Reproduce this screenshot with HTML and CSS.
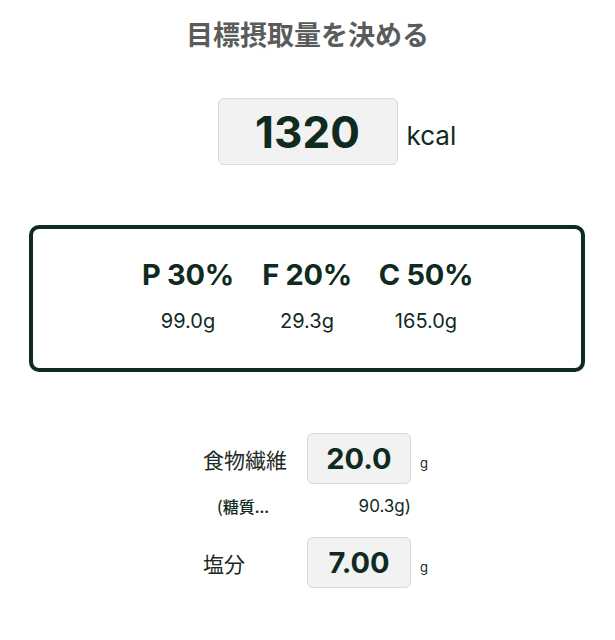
FILE: index.html
```html
<!DOCTYPE html>
<html>
	<head>
		<meta charset="utf-8" />
		<title>目標摂取量を決める</title>
	<link rel="stylesheet" href="styles.css">
	</head>
	<body>
	<div id="page">
		<h1 class="title">目標摂取量を決める</h1>

		<div class="kcal-row">
			<div class="spacer"></div>
			<div class="input big">1320</div>
			<div class="unit-kcal">kcal</div>
		</div>

		<div class="pfc">
			<div class="pfc-col">
				<div class="pct">P 30%</div>
				<div class="gram">99.0g</div>
			</div>
			<div class="pfc-col">
				<div class="pct">F 20%</div>
				<div class="gram">29.3g</div>
			</div>
			<div class="pfc-col">
				<div class="pct">C 50%</div>
				<div class="gram">165.0g</div>
			</div>
		</div>

		<div class="extra">
			<div class="row">
				<div class="label">食物繊維</div>
				<div class="input small">20.0</div>
				<div class="unit">g</div>
			</div>
			<div class="sugar">
				<span>(糖質...</span>
				<span>90.3g)</span>
			</div>
			<div class="row">
				<div class="label">塩分</div>
				<div class="input small">7.00</div>
				<div class="unit">g</div>
			</div>
		</div>
	</div>
	</body>
</html>
```

FILE: styles.css
```css
body{
	margin: 0;
	background: #fff;
	font-family: Inter, "Noto Sans CJK JP", sans-serif;
	color: #0f2a1e;
}
#page{
	width: 615px;
	padding-top: 16px;
}
.title{
	margin: 0;
	text-align: center;
	font-size: 27px;
	line-height: 36px;
	font-weight: 700;
	color: #5a5c5c;
	font-family: "Noto Sans CJK JP", sans-serif;
}
.kcal-row{
	display: grid;
	grid-template-columns: 1fr 180px 1fr;
	align-items: center;
	margin-top: 46px;
}
.input{
	box-sizing: border-box;
	background: #f2f2f2;
	border: 1px solid #dadada;
	border-radius: 6px;
	display: flex;
	align-items: center;
	justify-content: center;
	font-weight: 700;
	color: #0f2a1e;
}
.big{
	height: 67px;
	font-size: 44px;
}
.unit-kcal{
	padding-left: 9px;
	padding-top: 7px;
	font-size: 26px;
}
.pfc{
	margin: 60px 30px 0 29px;
	height: 147px;
	box-sizing: border-box;
	border: 4px solid #0f2a1e;
	border-radius: 10px;
	display: flex;
	justify-content: center;
	align-items: center;
	padding-bottom: 5px;
}
.pfc-col{
	width: 119px;
	text-align: center;
}
.pct{
	font-size: 29px;
	font-weight: 700;
	line-height: 34px;
	letter-spacing: -0.3px;
}
.gram{
	margin-top: 16px;
	font-size: 20px;
	line-height: 26px;
}
.extra{
	margin-top: 61px;
	padding-left: 203px;
}
.row{
	display: flex;
	align-items: center;
}
.label{
	width: 104px;
	font-size: 21px;
	font-family: "Noto Sans CJK JP", sans-serif;
	color: #1d2a24;
}
.small{
	width: 104px;
	height: 51px;
	font-size: 29px;
}
.unit{
	padding-left: 9px;
	padding-top: 8px;
	font-size: 13px;
}
.sugar{
	width: 208px;
	box-sizing: border-box;
	padding-left: 14px;
	display: flex;
	justify-content: space-between;
	font-size: 17px;
	line-height: 22px;
	margin: 11px 0 20px;
}
.sugar span:first-child{
	font-family: "Noto Sans CJK JP", sans-serif;
	font-weight: 500;
	font-size: 16px;
}
```
